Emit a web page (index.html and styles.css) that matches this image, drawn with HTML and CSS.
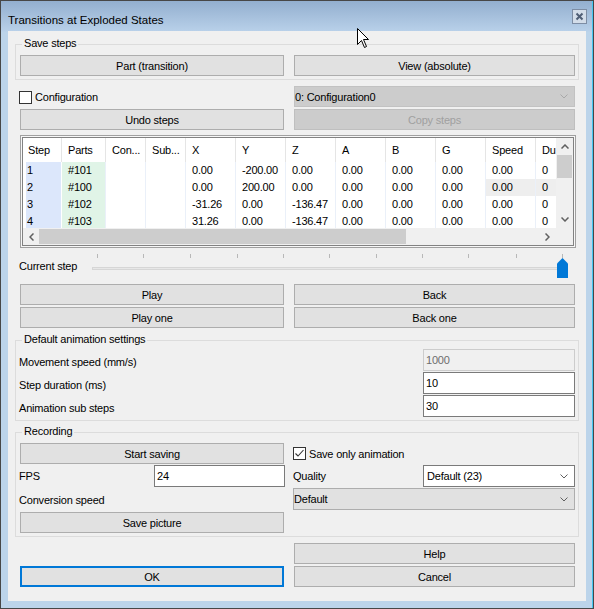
FILE: index.html
```html
<!DOCTYPE html>
<html>
<head>
	<meta charset="utf-8">
	<title>Transitions at Exploded States</title>
	<link rel="stylesheet" href="styles.css">
</head>
<body>

	<div class="window">
		<div class="titlebar">
			<span class="title">Transitions at Exploded States</span>
			<span class="close-btn">
				<svg width="13" height="13" viewBox="0 0 13 13"><path d="M3.5 3.5 L9.5 9.5 M9.5 3.5 L3.5 9.5" stroke="#4f5e75" stroke-width="2" fill="none"/></svg>
			</span>
		</div>

		<div class="client">
			<div class="group g-save">
				<span class="group-title">Save steps</span>
				<div class="pair">
					<button class="btn">Part (transition)</button>
					<button class="btn">View (absolute)</button>
				</div>
			</div>

			<div class="pair row-config">
				<label class="check"><span class="check-box"></span>Configuration</label>
				<div class="combo combo-disabled">
					<span>0: Configuration0</span>
					<svg class="chev" width="8" height="5" viewBox="0 0 8 5"><polyline points="0.5,0.5 4,4 7.5,0.5" fill="none" stroke="#a8a8a8"/></svg>
				</div>
			</div>

			<div class="pair row-undo">
				<button class="btn">Undo steps</button>
				<button class="btn btn-disabled">Copy steps</button>
			</div>

			<div class="list">
				<div class="list-box">
					<div class="table">
						<div class="thead">
							<div class="th c-step">Step</div>
							<div class="th c-parts">Parts</div>
							<div class="th c-con">Con...</div>
							<div class="th c-sub">Sub...</div>
							<div class="th c-num">X</div>
							<div class="th c-num">Y</div>
							<div class="th c-num">Z</div>
							<div class="th c-num">A</div>
							<div class="th c-num">B</div>
							<div class="th c-num">G</div>
							<div class="th c-num">Speed</div>
							<div class="th c-num">Du</div>
						</div>
						<div class="tr">
							<div class="td c-step">1</div>
							<div class="td c-parts">#101</div>
							<div class="td c-con"></div>
							<div class="td c-sub"></div>
							<div class="td c-num">0.00</div>
							<div class="td c-num">-200.00</div>
							<div class="td c-num">0.00</div>
							<div class="td c-num">0.00</div>
							<div class="td c-num">0.00</div>
							<div class="td c-num">0.00</div>
							<div class="td c-num">0.00</div>
							<div class="td c-num">0</div>
						</div>
						<div class="tr">
							<div class="td c-step">2</div>
							<div class="td c-parts">#100</div>
							<div class="td c-con"></div>
							<div class="td c-sub"></div>
							<div class="td c-num">0.00</div>
							<div class="td c-num">200.00</div>
							<div class="td c-num">0.00</div>
							<div class="td c-num">0.00</div>
							<div class="td c-num">0.00</div>
							<div class="td c-num">0.00</div>
							<div class="td c-num hot">0.00</div>
							<div class="td c-num hot">0</div>
						</div>
						<div class="tr">
							<div class="td c-step">3</div>
							<div class="td c-parts">#102</div>
							<div class="td c-con"></div>
							<div class="td c-sub"></div>
							<div class="td c-num">-31.26</div>
							<div class="td c-num">0.00</div>
							<div class="td c-num">-136.47</div>
							<div class="td c-num">0.00</div>
							<div class="td c-num">0.00</div>
							<div class="td c-num">0.00</div>
							<div class="td c-num">0.00</div>
							<div class="td c-num">0</div>
						</div>
						<div class="tr">
							<div class="td c-step">4</div>
							<div class="td c-parts">#103</div>
							<div class="td c-con"></div>
							<div class="td c-sub"></div>
							<div class="td c-num">31.26</div>
							<div class="td c-num">0.00</div>
							<div class="td c-num">-136.47</div>
							<div class="td c-num">0.00</div>
							<div class="td c-num">0.00</div>
							<div class="td c-num">0.00</div>
							<div class="td c-num">0.00</div>
							<div class="td c-num">0</div>
						</div>
					</div>
					<div class="vscroll">
						<div class="sb-arrow v-arrow">
							<svg width="8" height="5" viewBox="0 0 8 5"><polyline points="0.5,4.5 4,1 7.5,4.5" fill="none" stroke="#606060" stroke-width="1.5"/></svg>
						</div>
						<div class="v-thumb"></div>
						<div class="sb-space"></div>
						<div class="sb-arrow v-arrow">
							<svg width="8" height="5" viewBox="0 0 8 5"><polyline points="0.5,0.5 4,4 7.5,0.5" fill="none" stroke="#606060" stroke-width="1.5"/></svg>
						</div>
					</div>
					<div class="hscroll">
						<div class="sb-arrow h-arrow">
							<svg width="5" height="8" viewBox="0 0 5 8"><polyline points="4.5,0.5 1,4 4.5,7.5" fill="none" stroke="#606060" stroke-width="1.5"/></svg>
						</div>
						<div class="h-thumb"></div>
						<div class="sb-space"></div>
						<div class="sb-arrow h-arrow h-arrow-right">
							<svg width="5" height="8" viewBox="0 0 5 8"><polyline points="0.5,0.5 4,4 0.5,7.5" fill="none" stroke="#606060" stroke-width="1.5"/></svg>
						</div>
					</div>
					<div class="corner"></div>
				</div>
			</div>

			<div class="slider-row">
				<span class="slider-label">Current step</span>
				<svg class="slider" width="487" height="36" viewBox="0 0 487 36">
					<g fill="#b8b8b8">
						<rect x="9" y="6" width="1" height="4"/>
						<rect x="55" y="6" width="1" height="4"/>
						<rect x="102" y="6" width="1" height="4"/>
						<rect x="149" y="6" width="1" height="4"/>
						<rect x="195" y="6" width="1" height="4"/>
						<rect x="241" y="6" width="1" height="4"/>
						<rect x="288" y="6" width="1" height="4"/>
						<rect x="334" y="6" width="1" height="4"/>
						<rect x="380" y="6" width="1" height="4"/>
						<rect x="428" y="6" width="1" height="4"/>
						<rect x="474" y="6" width="1" height="4"/>
					</g>
					<rect x="4.5" y="19.5" width="474" height="2" fill="#e7e7e7" stroke="#d6d6d6"/>
					<path d="M469 15.5 L474.5 10 L480 15.5 V30 H469 Z" fill="#0078d7"/>
				</svg>
			</div>

			<div class="pair">
				<button class="btn">Play</button>
				<button class="btn">Back</button>
			</div>
			<div class="pair row-gap">
				<button class="btn">Play one</button>
				<button class="btn">Back one</button>
			</div>

			<div class="group g-anim">
				<span class="group-title">Default animation settings</span>
				<div class="field-row">
					<span class="field-label">Movement speed (mm/s)</span>
					<div class="textbox textbox-disabled">1000</div>
				</div>
				<div class="field-row">
					<span class="field-label">Step duration (ms)</span>
					<div class="textbox">10</div>
				</div>
				<div class="field-row">
					<span class="field-label">Animation sub steps</span>
					<div class="textbox">30</div>
				</div>
			</div>

			<div class="group g-rec">
				<span class="group-title">Recording</span>
				<div class="rec-grid">
					<button class="btn">Start saving</button>
					<label class="check">
						<span class="check-box">
							<svg width="11" height="11" viewBox="0 0 11 11"><polyline points="1.5,5.5 4,8 9.5,2" fill="none" stroke="#333" stroke-width="1.1"/></svg>
						</span>Save only animation
					</label>

					<div class="split">
						<span class="field-label">FPS</span>
						<div class="textbox textbox-fps">24</div>
					</div>
					<div class="split">
						<span class="field-label q-label">Quality</span>
						<div class="combo combo-white combo-quality">
							<span>Default (23)</span>
							<svg class="chev" width="8" height="5" viewBox="0 0 8 5"><polyline points="0.5,0.5 4,4 7.5,0.5" fill="none" stroke="#606060"/></svg>
						</div>
					</div>

					<span class="field-label conv-label">Conversion speed</span>
					<div class="combo combo-list">
						<span>Default</span>
						<svg class="chev" width="8" height="5" viewBox="0 0 8 5"><polyline points="0.5,0.5 4,4 7.5,0.5" fill="none" stroke="#606060"/></svg>
					</div>

					<button class="btn">Save picture</button>
				</div>
			</div>

			<div class="bottom">
				<button class="btn btn-help">Help</button>
				<button class="btn btn-default btn-ok">OK</button>
				<button class="btn btn-cancel">Cancel</button>
			</div>
		</div>

		<svg class="cursor" width="13" height="21" viewBox="0 0 13 21">
			<path d="M0.5 0.5 V16.5 L4.5 12.5 L7.5 19.5 L9.5 18.5 L6.5 11.5 H11.5 Z" fill="#fff" stroke="#000"/>
		</svg>
	</div>

</body>
</html>
```

FILE: styles.css
```css
* {
	box-sizing: border-box;
}
html,
body {
	margin: 0;
}
body {
	font-family: "Liberation Sans", Arial, sans-serif;
	font-size: 11px;
	letter-spacing: -0.2px;
	color: #000;
	background: #bcd4ea;
}

/* window frame */
.window {
	position: relative;
	width: 594px;
	height: 609px;
	display: flex;
	flex-direction: column;
	border: 1px solid #474747;
	background: linear-gradient(#93afcf 0, #b8d0e9 30px, #bcd4ea 31px);
	box-shadow: inset -1px 0 0 #46c6f0;
}
.titlebar {
	height: 30px;
	flex: none;
	display: flex;
	justify-content: space-between;
	align-items: flex-start;
	padding: 0 6px 0 7px;
}
.title {
	margin-top: 11px;
	font-size: 11.5px;
	line-height: 16px;
	letter-spacing: 0;
}
.close-btn {
	margin-top: 8px;
	width: 15px;
	height: 15px;
	border: 1px solid #7d8da4;
	background: #d3dde9;
	display: flex;
}
.client {
	flex: 1;
	margin: 0 7px 7px;
	padding-left: 12px;
	background: #f0f0f0;
}
.cursor {
	position: absolute;
	left: 356px;
	top: 27px;
}

/* groups */
.group {
	position: relative;
	margin-left: -5px;
	width: 564px;
	border: 1px solid #dcdcdc;
	padding: 10px 3px 3px 4px;
}
.group-title {
	position: absolute;
	top: -8px;
	left: 6px;
	padding: 0 2px;
	line-height: 13px;
	background: #f0f0f0;
}
.g-save {
	margin-top: 13px;
}
.g-anim {
	margin-top: 12px;
	padding-top: 8px;
}
.g-rec {
	margin-top: 11px;
}

/* controls */
.pair {
	display: grid;
	grid-template-columns: 264px 281px;
	column-gap: 10px;
}
.btn {
	height: 21px;
	padding: 0;
	border: 1px solid #adadad;
	background: #e1e1e1;
	font: inherit;
	letter-spacing: inherit;
	color: #000;
}
.btn-disabled {
	background: #cccccc;
	border-color: #bfbfbf;
	color: #a0a0a0;
}
.btn-default {
	border: 2px solid #0078d7;
}
.row-config {
	margin-top: 6px;
	height: 21px;
	align-items: center;
}
.row-undo,
.row-gap {
	margin-top: 2px;
}
.check {
	display: flex;
	align-items: center;
	gap: 3px;
	margin-left: -1px;
}
.row-config .check {
	margin-top: 1px;
}
.check-box {
	width: 13px;
	height: 13px;
	border: 1px solid #333;
	background: #fff;
	display: flex;
}
.combo {
	height: 21px;
	display: flex;
	align-items: center;
	justify-content: space-between;
	padding: 0 6px 0 0;
	border: 1px solid #c2c2c2;
	white-space: nowrap;
}
.combo-disabled {
	background: #cccccc;
}
.combo-white {
	background: #fff;
	border-color: #7a7a7a;
	padding-left: 3px;
}
.combo-list {
	height: 22px;
	align-self: start;
	background: #e1e1e1;
	border-color: #adadad;
}
.textbox {
	width: 152px;
	height: 22px;
	border: 1px solid #7a7a7a;
	background: #fff;
	padding-left: 2px;
	display: flex;
	align-items: center;
}
.textbox-disabled {
	background: #f0f0f0;
	border-color: #cccccc;
	color: #6d6d6d;
}
.textbox-fps {
	width: 131px;
	margin-right: -1px;
}

/* list view */
.list {
	margin-top: 5px;
	width: 556px;
	height: 113px;
	border: 1px solid #a0a0a0;
	padding: 1px;
	background: #f7f7f7;
}
.list-box {
	height: 100%;
	border: 1px solid #828282;
	background: #fff;
	display: grid;
	grid-template-columns: 533px 17px;
	grid-template-rows: 90px 17px;
}
.table {
	overflow: hidden;
}
.thead,
.tr {
	display: flex;
	padding-left: 3px;
	white-space: nowrap;
}
.thead {
	height: 24px;
}
.tr {
	height: 17px;
}
.th,
.td {
	flex: none;
	overflow: hidden;
	padding-left: 6px;
}
.th {
	line-height: 24px;
	border-right: 1px solid #e5e5e5;
}
.td {
	line-height: 17px;
	border-right: 1px solid #eaf0f9;
}
.c-step {
	width: 36px;
}
.th.c-step {
	padding-left: 2px;
}
.c-parts {
	width: 44px;
}
.c-con,
.c-sub {
	width: 40px;
}
.c-num {
	width: 50px;
}
.td.c-step {
	padding-left: 1px;
	background: #dce7fb;
	border-right-color: #fff;
}
.td.c-parts {
	background: #e0f4e7;
}
.td.hot {
	background: #eeeeee;
}
.vscroll,
.hscroll,
.corner {
	background: #f0f0f0;
}
.vscroll {
	display: flex;
	flex-direction: column;
}
.hscroll {
	display: flex;
	align-items: center;
}
.sb-arrow {
	flex: none;
	display: flex;
	align-items: center;
	justify-content: center;
}
.v-arrow {
	height: 17px;
}
.h-arrow {
	width: 16px;
	height: 17px;
}
.h-arrow-right {
	width: 17px;
}
.sb-space {
	flex: 1;
}
.v-thumb {
	height: 23px;
	margin: 0 1px;
	background: #cdcdcd;
}
.h-thumb {
	width: 367px;
	height: 15px;
	background: #cdcdcd;
}

/* slider */
.slider-row {
	display: flex;
	align-items: center;
	height: 36px;
}
.slider-label {
	width: 69px;
	margin-left: -1px;
}
.slider {
	display: block;
}

/* animation settings */
.field-row {
	display: flex;
	justify-content: space-between;
	align-items: center;
	height: 22px;
}
.field-row + .field-row {
	margin-top: 1px;
}
.field-label {
	margin-left: -1px;
}
.field-row .field-label {
	padding-top: 3px;
}

/* recording */
.rec-grid {
	display: grid;
	grid-template-columns: 264px 282px;
	column-gap: 9px;
	grid-template-rows: 21px 22px 23px 21px;
	row-gap: 1px;
}
.rec-grid .check {
	margin-left: 0;
}
.split {
	display: flex;
	justify-content: space-between;
	align-items: center;
}
.q-label {
	margin-left: 0;
}
.combo-quality {
	width: 152px;
	height: 22px;
}
.conv-label {
	align-self: center;
}

/* dialog buttons */
.bottom {
	margin-top: 6px;
	display: grid;
	grid-template-columns: 264px 281px;
	column-gap: 10px;
	grid-template-rows: 21px 21px;
	row-gap: 2px;
}
.btn-help {
	grid-column: 2;
	grid-row: 1;
}
.btn-ok {
	grid-column: 1;
	grid-row: 2;
}
.btn-cancel {
	grid-column: 2;
	grid-row: 2;
}
```
